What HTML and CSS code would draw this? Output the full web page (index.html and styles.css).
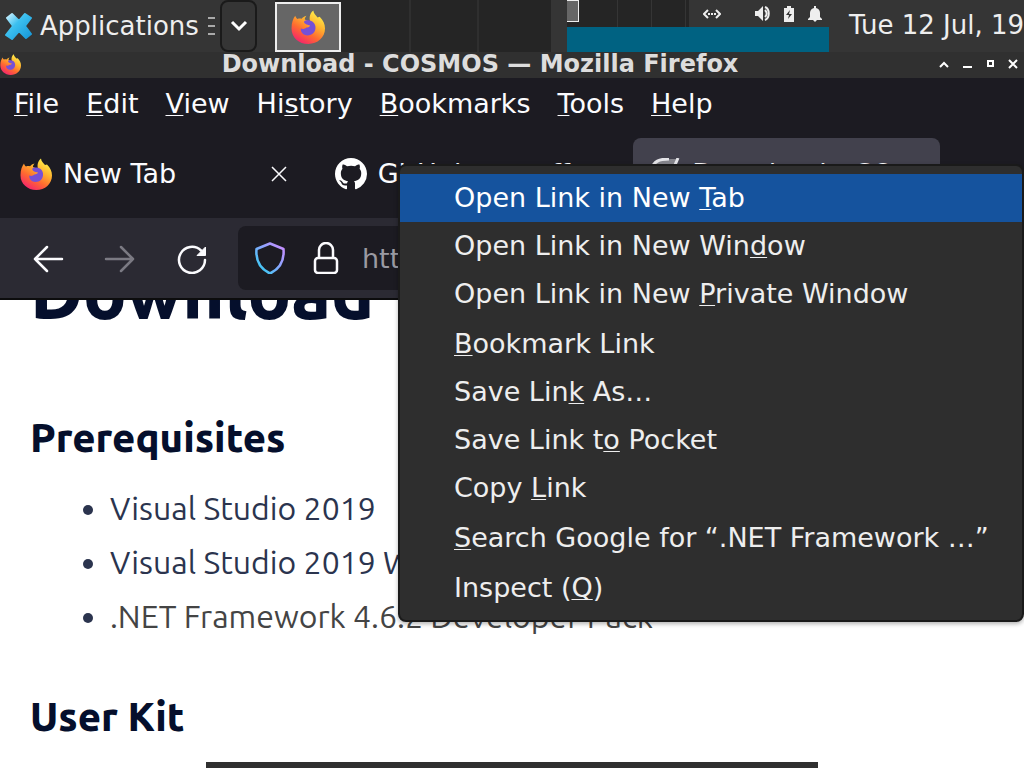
FILE: index.html
```html
<!DOCTYPE html>
<html lang="en">
<head>
    <meta charset="UTF-8">
    <meta name="viewport" content="width=device-width, initial-scale=1.0">
    <title>Download - COSMOS — Mozilla Firefox</title>
    <link rel="stylesheet" href="styles.css">
</head>
<body>
    <!-- gradients and the firefox logo, shared by the panel, title bar and tab -->
    <svg class="defs" aria-hidden="true">
        <defs>
            <linearGradient id="flame" x1="0.85" y1="0.1" x2="0.3" y2="1">
                <stop offset="0" stop-color="#fff04a"/>
                <stop offset="0.35" stop-color="#ffb02e"/>
                <stop offset="0.65" stop-color="#ff6a30"/>
                <stop offset="1" stop-color="#f5246c"/>
            </linearGradient>
            <linearGradient id="shield" x1="1" y1="0" x2="0" y2="1">
                <stop offset="0" stop-color="#d08bff"/>
                <stop offset="0.45" stop-color="#8aa5ff"/>
                <stop offset="1" stop-color="#25d5f0"/>
            </linearGradient>
            <linearGradient id="cross" x1="0" y1="0" x2="1" y2="1">
                <stop offset="0" stop-color="#d9f4ff"/>
                <stop offset="0.4" stop-color="#3cc0f0"/>
                <stop offset="1" stop-color="#1596d8"/>
            </linearGradient>
            <symbol id="firefox" viewBox="0 0 32 32">
                <path fill="url(#flame)" d="M4 5.500c.4 1.400 1 2.300 2 3 1.400-.5 2.800-.6 4-.2C11 7 12.500 6 14.500 5.500c-1 1.200-1.600 2.400-1.500 3.500l5.500 2.500C17 9 17 3.500 21 .5c.3 3 2.200 4.200 4 6.500l2-.6c3.300 3.200 5 7 5 11.100C32 26 25 32 16.300 32 7.500 32 .5 26 .5 17.300.5 12 2 8 4 5.500z"/>
                <path fill="#7650d6" d="M13 10c5-1.500 9.500 1 10 5.500.5 5-3 8.500-7.500 8.500-4 0-6.500-3-6.300-6.500 2 .8 3.800.4 5.300-1 2-.2 3.200-.8 3.500-2-1.500-.2-3-.5-4.500-1.500-1.500-1-1.500-2.500-.5-3z"/>
            </symbol>
        </defs>
    </svg>

    <header class="panel">
        <button class="apps">
            <svg class="apps-icon" viewBox="0 0 28 28"><path fill="url(#cross)" stroke="url(#cross)" stroke-width="2" stroke-linejoin="round" d="M2 6l5-4 7 7 6-7 6 4-6 8 6 8-5 4-7-7-7 8-6-4 7-9z"/></svg>
            <span>Applications</span>
        </button>
        <span class="handle"></span>
        <button class="arrow" aria-label="Show windows">
            <svg viewBox="0 0 18 12"><path d="M2 2l7 7 7-7" fill="none" stroke="#fff" stroke-width="3"/></svg>
        </button>
        <div class="tasks">
            <button class="task active" aria-label="Firefox"><svg viewBox="0 0 32 32"><use href="#firefox"/></svg></button>
            <span class="slot"></span>
            <span class="slot"></span>
            <span class="slot"></span>
        </div>
        <div class="middle">
            <div class="pager">
                <span class="desk current"></span>
                <span class="desk"></span>
                <span class="desk"></span>
                <span class="desk"></span>
            </div>
            <div class="tray">
                <svg class="net" viewBox="0 0 18 10"><path d="M5 1L1 5l4 4M13 1l4 4-4 4" fill="none" stroke="#eee" stroke-width="2"/><path d="M5 5h8" stroke="#eee" stroke-width="2" stroke-dasharray="2 1"/></svg>
                <svg viewBox="0 0 16 16"><path d="M0 5h3l5-5v15l-5-5H0z" fill="#eee"/><path d="M10 4c2 2 2 5 0 7M10 1c5 2 5 11 0 13" fill="none" stroke="#eee" stroke-width="2"/></svg>
                <svg viewBox="0 0 16 16"><path d="M3 2h3V0h4v2h3v14H3z" fill="#eee"/><path d="M9 4L5 9h3l-1 4 4-5H8z" fill="#333"/></svg>
                <svg viewBox="0 0 16 16"><path d="M7 0h2v2c3 .6 4 3 4 5v4l2 2v1H1v-1l2-2V7c0-2 1-4.400 4-5zM6 14h4l-2 2z" fill="#eee"/></svg>
            </div>
            <div class="graph"></div>
        </div>
        <time class="clock">Tue 12 Jul, 19</time>
    </header>

    <div class="titlebar">
        <svg class="title-icon" viewBox="0 0 32 32"><use href="#firefox"/></svg>
        <span class="title">Download - COSMOS — Mozilla Firefox</span>
        <div class="window-buttons">
            <button aria-label="Shade"><svg viewBox="0 0 10 10"><path d="M1 8l4-4 4 4" fill="none" stroke="#fff" stroke-width="2"/></svg></button>
            <button aria-label="Minimize"><svg viewBox="0 0 10 10"><path d="M1 8h9" stroke="#fff" stroke-width="2"/></svg></button>
            <button aria-label="Maximize"><svg viewBox="0 0 10 10"><path d="M3 2h5v5H3z" fill="none" stroke="#fff" stroke-width="2"/></svg></button>
            <button aria-label="Close"><svg viewBox="0 0 10 10"><path d="M1 1l8 8M9 1L1 9" stroke="#fff" stroke-width="2"/></svg></button>
        </div>
    </div>

    <nav class="menubar">
        <button><u>F</u>ile</button>
        <button><u>E</u>dit</button>
        <button><u>V</u>iew</button>
        <button>Hi<u>s</u>tory</button>
        <button><u>B</u>ookmarks</button>
        <button><u>T</u>ools</button>
        <button><u>H</u>elp</button>
    </nav>

    <div class="tabs">
        <div class="tab">
            <svg class="favicon" viewBox="0 0 32 32"><use href="#firefox"/></svg>
            <span class="label">New Tab</span>
            <button class="close" aria-label="Close tab"><svg viewBox="0 0 16 16"><path d="M1 1l14 14M15 1L1 15" stroke="#fbfbfe" stroke-width="1.500"/></svg></button>
        </div>
        <div class="tab">
            <svg class="favicon" viewBox="0 0 16 16"><path fill="#fff" d="M8 0C3.580 0 0 3.580 0 8c0 3.540 2.290 6.530 5.470 7.590.4.070.55-.17.55-.38 0-.19-.01-.82-.01-1.490-2.010.37-2.530-.49-2.690-.94-.09-.23-.48-.94-.82-1.130-.28-.15-.68-.52-.01-.53.63-.01 1.080.58 1.230.82.72 1.210 1.870.87 2.330.66.07-.52.28-.87.51-1.070-1.780-.2-3.640-.89-3.640-3.950 0-.87.31-1.590.82-2.150-.08-.2-.36-1.020.08-2.120 0 0 .67-.21 2.200.82.64-.18 1.320-.27 2-.27s1.360.09 2 .27c1.530-1.040 2.200-.82 2.200-.82.44 1.100.16 1.920.08 2.120.51.56.82 1.270.82 2.150 0 3.070-1.870 3.750-3.650 3.950.29.25.54.73.54 1.480 0 1.070-.01 1.930-.01 2.200 0 .21.15.46.55.38A8.010 8.010 0 0 0 16 8c0-4.420-3.580-8-8-8z"/></svg>
            <span class="label">GitHub - m-off</span>
        </div>
        <div class="tab selected">
            <svg class="favicon" viewBox="0 0 32 32"><path d="M2 12C5 3 12 1 27 1l-5 22H4z" fill="#85858c"/><path d="M2 12C5 3 10 1 20 1M29 0l-6 14" fill="none" stroke="#e4e4e8" stroke-width="3"/></svg>
            <span class="label">Download - CO</span>
        </div>
        <button class="new-tab" aria-label="New tab"><svg viewBox="0 0 20 20"><path d="M10 0v20M0 10h20" stroke="#fbfbfe" stroke-width="2"/></svg></button>
    </div>

    <div class="toolbar">
        <button aria-label="Back"><svg viewBox="0 0 32 32"><path d="M30 17H3M15 5L3 17l12 12" fill="none" stroke="#fbfbfe" stroke-width="2.500" stroke-linecap="round" stroke-linejoin="round"/></svg></button>
        <button aria-label="Forward" disabled><svg viewBox="0 0 32 32"><path d="M2 17h27M17 5l12 12-12 12" fill="none" stroke="#7b7a83" stroke-width="2.500" stroke-linecap="round" stroke-linejoin="round"/></svg></button>
        <button aria-label="Reload"><svg viewBox="0 0 32 32"><path d="M29 18A13 13 0 1 1 25 8.500" fill="none" stroke="#fbfbfe" stroke-width="2.500" stroke-linecap="round"/><path d="M29.500 5v8.500H21z" fill="#fbfbfe" stroke="#fbfbfe" stroke-linejoin="round"/></svg></button>
        <div class="urlbar">
            <svg viewBox="0 0 32 32"><path d="M16 1.500L29.500 7c1 12-4 20-13.500 24.500C6.500 27 1.500 19 2.500 7z" fill="none" stroke="url(#shield)" stroke-width="2.500" stroke-linejoin="round"/></svg>
            <svg viewBox="0 0 32 32"><rect x="5" y="16" width="22" height="15" rx="3" fill="none" stroke="#fbfbfe" stroke-width="2.500"/><path d="M9 16V8a7 7 0 0 1 14 0v8" fill="none" stroke="#fbfbfe" stroke-width="2.500"/></svg>
            <input type="text" aria-label="Address" value="https://">
        </div>
    </div>

    <main class="page">
        <h1>Download</h1>
        <h2>Prerequisites</h2>
        <ul>
            <li>Visual Studio 2019</li>
            <li>Visual Studio 2019 WDK</li>
            <li><a href="#">.NET Framework 4.6.2 Developer Pack</a></li>
        </ul>
        <h2>User Kit</h2>
    </main>

    <div class="context-menu" role="menu">
        <button role="menuitem" class="hover">Open Link in New <u>T</u>ab</button>
        <button role="menuitem">Open Link in New Win<u>d</u>ow</button>
        <button role="menuitem">Open Link in New <u>P</u>rivate Window</button>
        <hr>
        <button role="menuitem"><u>B</u>ookmark Link</button>
        <button role="menuitem">Save Lin<u>k</u> As…</button>
        <button role="menuitem">Save Link t<u>o</u> Pocket</button>
        <button role="menuitem">Copy <u>L</u>ink</button>
        <hr>
        <button role="menuitem"><u>S</u>earch Google for “.NET Framework …”</button>
        <hr>
        <button role="menuitem">Inspect (<u>Q</u>)</button>
    </div>
    <div class="dock"></div>
</body>
</html>
```
FILE: styles.css
```css
* {
    box-sizing: border-box;
}
body {
    margin: 0;
    height: 100vh;
    display: flex;
    flex-direction: column;
    overflow: hidden;
    position: relative;
    background: #fff;
    color: #fbfbfe;
    font-family: "DejaVu Sans", sans-serif;
    font-size: 27px;
}
button {
    margin: 0;
    padding: 0;
    border: none;
    background: none;
    color: inherit;
    font: inherit;
    white-space: nowrap;
}
svg {
    display: block;
    flex: none;
}
u {
    text-decoration-thickness: 1px;
    text-underline-offset: 2px;
    text-decoration-skip-ink: none;
}
.defs {
    position: absolute;
    width: 0;
    height: 0;
}

/* desktop panel */
.panel {
    display: flex;
    flex: none;
    height: 52px;
    background: #353535;
    color: #eee;
    font-size: 26px;
    overflow: hidden;
}
.apps {
    display: flex;
    align-items: center;
    gap: 7px;
    padding-left: 5px;
}
.apps-icon {
    width: 28px;
    height: 28px;
}
.handle {
    width: 8px;
    height: 18px;
    margin: 17px 5px 0 9px;
    background: repeating-linear-gradient(#aaa 0 2px, transparent 2px 8px);
}
.arrow {
    display: flex;
    align-items: center;
    justify-content: center;
    width: 38px;
    border: 2px solid #1a1a1a;
    border-radius: 8px;
}
.arrow svg {
    width: 18px;
    height: 12px;
}
.tasks {
    display: flex;
    margin-left: 18px;
    background: #252525;
}
.task {
    display: flex;
    align-items: center;
    justify-content: center;
    width: 66px;
    height: 50px;
    margin-top: 2px;
    border: 2px solid #eee;
    background: #666;
}
.task svg {
    width: 34px;
    height: 34px;
}
.slot {
    width: 70px;
    border-right: 2px solid #2f2f2f;
}
.slot + .slot {
    width: 68px;
}
.slot:last-child {
    width: 72px;
    border: none;
}
.middle {
    display: grid;
    grid-template-columns: 122px 140px;
    grid-template-rows: 27px 25px;
    margin-left: 16px;
}
.pager {
    display: flex;
    background: #252525;
}
.desk {
    width: 34px;
    border-right: 1px solid #353535;
}
.desk.current {
    width: 12px;
    height: 22px;
    margin-right: 5px;
    border: 1px solid #eee;
    border-left: none;
    background: #666;
}
.tray {
    display: flex;
    align-items: center;
    justify-content: flex-end;
    gap: 10px;
    padding-right: 6px;
}
.tray svg {
    width: 16px;
    height: 16px;
}
.tray .net {
    width: 18px;
    height: 10px;
    margin-right: 24px;
}
.graph {
    grid-column: span 2;
    background: #006282;
}
.clock {
    padding-left: 20px;
    line-height: 50px;
    white-space: nowrap;
}

/* window title */
.titlebar {
    display: flex;
    flex: none;
    align-items: center;
    height: 26px;
    padding-bottom: 2px;
    background: #303030;
    overflow: hidden;
}
.title-icon {
    width: 21px;
    height: 21px;
}
.title {
    flex: 1;
    text-align: center;
    font-size: 24px;
    font-weight: bold;
    line-height: 24px;
    color: #ddd;
}
.window-buttons {
    display: flex;
    gap: 13px;
    padding-right: 6px;
}
.window-buttons svg {
    width: 10px;
    height: 10px;
}

/* browser chrome */
.menubar {
    display: flex;
    flex: none;
    gap: 27px;
    height: 52px;
    padding: 0 0 2px 14px;
    background: #1c1b22;
}
.tabs {
    display: flex;
    flex: none;
    height: 88px;
    padding: 8px 4px;
    background: #1c1b22;
}
.tab {
    display: flex;
    align-items: center;
    width: 307px;
    height: 72px;
    margin-right: 8px;
    padding: 0 16px;
    border-radius: 8px;
    white-space: nowrap;
}
.tab.selected {
    background: #42414d;
}
.favicon {
    width: 32px;
    height: 32px;
    margin-right: 11px;
}
.label {
    flex: 1;
    padding-bottom: 2px;
    overflow: hidden;
}
.close svg {
    width: 16px;
    height: 16px;
    margin-right: 8px;
}
.new-tab {
    padding: 0 26px;
}
.new-tab svg {
    width: 20px;
    height: 20px;
}
.toolbar {
    display: flex;
    flex: none;
    align-items: center;
    gap: 40px;
    height: 82px;
    padding-left: 32px;
    border-bottom: 2px solid #0c0c0d;
    background: #2b2a33;
}
.toolbar svg {
    width: 32px;
    height: 32px;
}
.urlbar {
    display: flex;
    flex: 1;
    align-items: center;
    gap: 24px;
    height: 64px;
    margin-left: -10px;
    padding-left: 16px;
    border-radius: 8px;
    background: #1c1b22;
}
.urlbar input {
    flex: 1;
    margin-left: -4px;
    padding: 0;
    border: none;
    background: none;
    color: #9a9aa2;
    font: inherit;
}

/* web page */
.page {
    flex: 1;
    padding: 0 30px;
    overflow: hidden;
    color: #2b344e;
    font-family: Ubuntu, "Noto Sans", sans-serif;
    font-size: 32px;
    font-weight: 450;
}
h1, h2 {
    margin: 0;
    color: #050f2c;
    font-weight: 800;
}
h1 {
    margin-top: -61px;
    font-size: 72px;
    line-height: 108px;
}
h2 {
    margin-top: 61px;
    font-size: 40px;
    line-height: 60px;
}
ul {
    margin: 13px 0 44px;
    padding-left: 80px;
}
ul + h2 {
    margin-top: 0;
}
li {
    line-height: 54px;
}
li a {
    color: #444;
    text-decoration: none;
}

/* right click menu */
.context-menu {
    position: absolute;
    top: 164px;
    right: 0;
    width: 626px;
    padding: 8px 0;
    border: 2px solid #1a1a1a;
    border-radius: 8px;
    background: #2e2e2e;
    color: #eee;
    box-shadow: 0 2px 4px rgba(0, 0, 0, 0.3);
}
.context-menu button {
    display: block;
    width: 100%;
    height: 48px;
    padding: 0 0 2px 54px;
    text-align: left;
}
.context-menu .hover {
    background: #15539e;
    color: #fff;
}
.context-menu hr {
    height: 2px;
    margin: 0;
    border: none;
}
.dock {
    position: absolute;
    bottom: 0;
    left: 206px;
    right: 206px;
    height: 6px;
    background: #303030;
}
```
